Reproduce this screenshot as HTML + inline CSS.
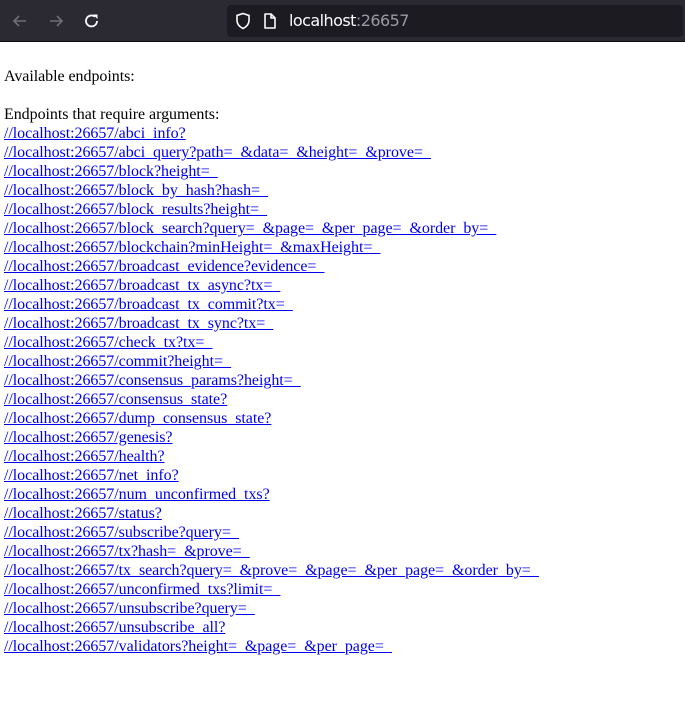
<!DOCTYPE html>
<html><head><meta charset="utf-8"><style>
body{margin:0;width:685px;height:723px;background:#fff;overflow:hidden;position:relative}
.bar{position:absolute;left:0;top:0;width:685px;height:41px;background:#2b2a33;border-bottom:1px solid #0c0c0d}
.url{position:absolute;left:227px;top:5px;width:456px;height:32px;background:#1c1b22;border-radius:4px}
.url span{position:absolute;left:62px;top:6px;font:16px "DejaVu Sans","Liberation Sans",sans-serif;color:#fbfbfe;letter-spacing:-0.55px}
.url span i{font-style:normal;color:#9a99a3}
svg{position:absolute}
.c{position:absolute;left:4px;top:67px;font:16px/19px "Liberation Serif",serif;color:#000;letter-spacing:-0.05px}
a{color:#0000ee;text-decoration:underline}
</style></head><body>
<div class="bar">
<svg style="left:10px;top:11px" width="20" height="20" viewBox="0 0 20 20"><path d="M16 10H4M9 5L4 10L9 15" stroke="#6f6e75" stroke-width="1.6" fill="none"/></svg>
<svg style="left:46px;top:11px" width="20" height="20" viewBox="0 0 20 20"><path d="M4 10H16M11 5L16 10L11 15" stroke="#6f6e75" stroke-width="1.6" fill="none"/></svg>
<svg style="left:82px;top:11px" width="20" height="20" viewBox="0 0 20 20"><path d="M15 10A5.5 5.5 0 1 1 13 5.7" stroke="#fbfbfe" stroke-width="1.8" fill="none"/><path d="M11 3.5H15.5V8Z" fill="#fbfbfe"/></svg>
<div class="url">
<svg style="left:6px;top:6px" width="20" height="20" viewBox="0 0 20 20"><path d="M10 2.5L16 4.5V9.5C16 13.5 13 16 10 17.5C7 16 4 13.5 4 9.5V4.5Z" stroke="#fbfbfe" stroke-width="1.6" fill="none"/></svg>
<svg style="left:34px;top:6px" width="18" height="20" viewBox="0 0 18 20"><path d="M4 3H10L14 7V17H4Z M10 3V7H14" stroke="#fbfbfe" stroke-width="1.6" fill="none" stroke-linejoin="round"/></svg>
<span>localhost<i>:26657</i></span>
</div>
</div>
<div class="c">Available endpoints:<br><br>Endpoints that require arguments:<br>
<a>//localhost:26657/abci_info?</a><br>
<a>//localhost:26657/abci_query?path=_&amp;data=_&amp;height=_&amp;prove=_</a><br>
<a>//localhost:26657/block?height=_</a><br>
<a>//localhost:26657/block_by_hash?hash=_</a><br>
<a>//localhost:26657/block_results?height=_</a><br>
<a>//localhost:26657/block_search?query=_&amp;page=_&amp;per_page=_&amp;order_by=_</a><br>
<a>//localhost:26657/blockchain?minHeight=_&amp;maxHeight=_</a><br>
<a>//localhost:26657/broadcast_evidence?evidence=_</a><br>
<a>//localhost:26657/broadcast_tx_async?tx=_</a><br>
<a>//localhost:26657/broadcast_tx_commit?tx=_</a><br>
<a>//localhost:26657/broadcast_tx_sync?tx=_</a><br>
<a>//localhost:26657/check_tx?tx=_</a><br>
<a>//localhost:26657/commit?height=_</a><br>
<a>//localhost:26657/consensus_params?height=_</a><br>
<a>//localhost:26657/consensus_state?</a><br>
<a>//localhost:26657/dump_consensus_state?</a><br>
<a>//localhost:26657/genesis?</a><br>
<a>//localhost:26657/health?</a><br>
<a>//localhost:26657/net_info?</a><br>
<a>//localhost:26657/num_unconfirmed_txs?</a><br>
<a>//localhost:26657/status?</a><br>
<a>//localhost:26657/subscribe?query=_</a><br>
<a>//localhost:26657/tx?hash=_&amp;prove=_</a><br>
<a>//localhost:26657/tx_search?query=_&amp;prove=_&amp;page=_&amp;per_page=_&amp;order_by=_</a><br>
<a>//localhost:26657/unconfirmed_txs?limit=_</a><br>
<a>//localhost:26657/unsubscribe?query=_</a><br>
<a>//localhost:26657/unsubscribe_all?</a><br>
<a>//localhost:26657/validators?height=_&amp;page=_&amp;per_page=_</a><br>
</div>
</body></html>
